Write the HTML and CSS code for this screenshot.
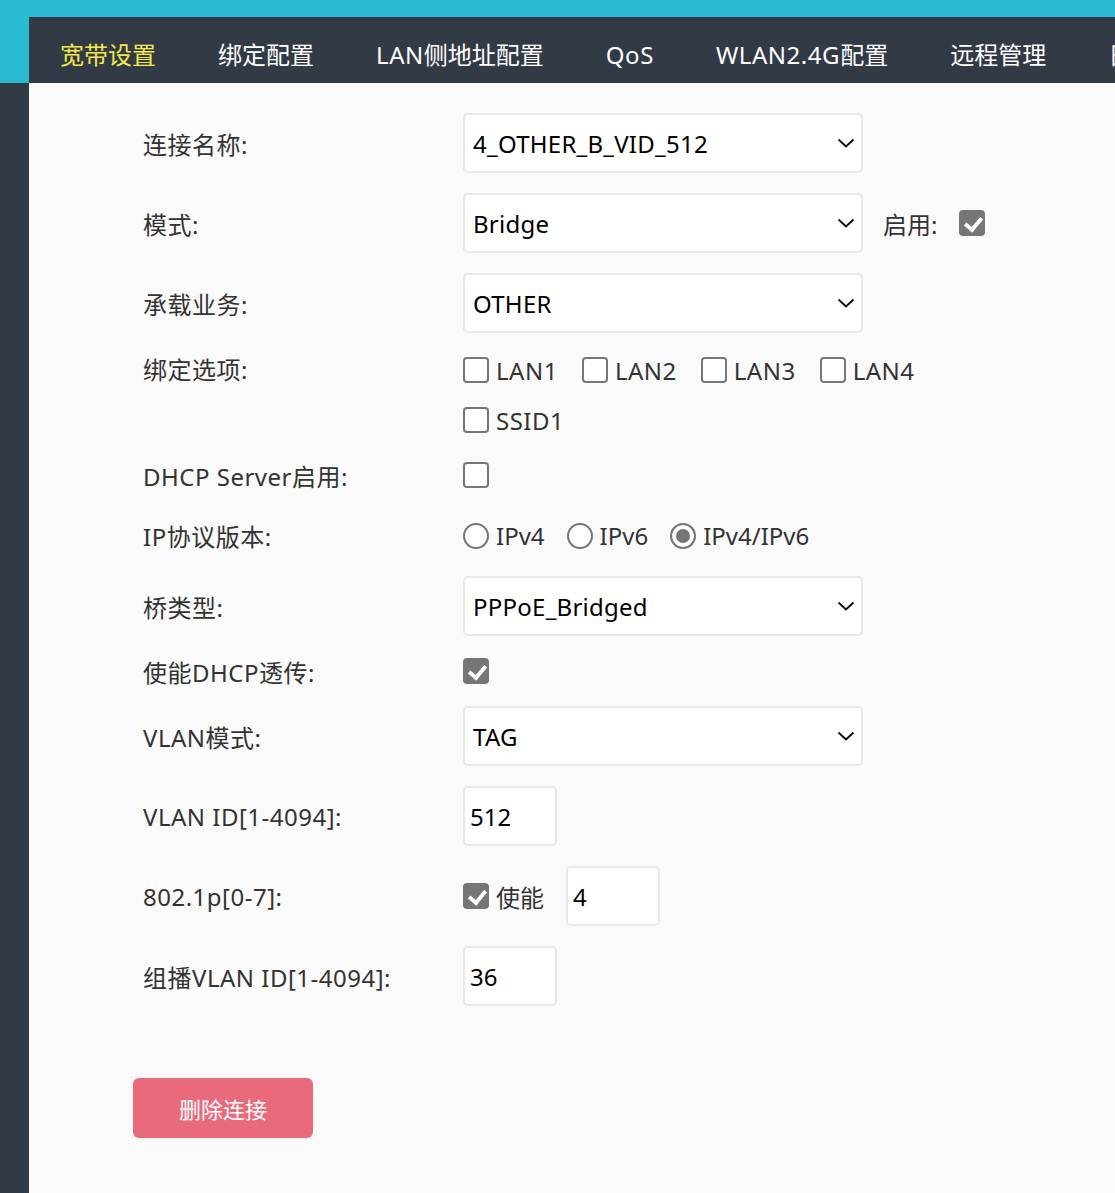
FILE: index.html
```html
<!DOCTYPE html>
<html lang="zh-CN">
<head>
<meta charset="utf-8">
<title>宽带设置</title>
<link rel="stylesheet" href="styles.css">
</head>
<body>
<header class="top">
  <nav class="nav">
    <a class="nav-item active">宽带设置</a>
    <a class="nav-item">绑定配置</a>
    <a class="nav-item"><span class="lt">LAN</span>侧地址配置</a>
    <a class="nav-item"><span class="lt">QoS</span></a>
    <a class="nav-item"><span class="lt">WLAN2.4G</span>配置</a>
    <a class="nav-item">远程管理</a>
    <a class="nav-item">日志管理</a>
  </nav>
</header>
<main class="page">
  <form class="form">
    <div class="row row-sel">
      <label class="lbl">连接名称:</label>
      <div class="select"><select><option>4_OTHER_B_VID_512</option></select><svg class="chev" viewBox="0 0 18 10" width="18" height="10"><polyline points="1.5,1.5 9,8.5 16.5,1.5"/></svg></div>
    </div>
    <div class="row row-sel">
      <label class="lbl">模式:</label>
      <div class="select"><select><option>Bridge</option></select><svg class="chev" viewBox="0 0 18 10" width="18" height="10"><polyline points="1.5,1.5 9,8.5 16.5,1.5"/></svg></div>
      <span class="inline-lbl">启用:</span>
      <input class="cb" type="checkbox" checked>
    </div>
    <div class="row row-sel">
      <label class="lbl">承载业务:</label>
      <div class="select"><select><option>OTHER</option></select><svg class="chev" viewBox="0 0 18 10" width="18" height="10"><polyline points="1.5,1.5 9,8.5 16.5,1.5"/></svg></div>
    </div>
    <div class="row row-bind">
      <label class="lbl lbl-line">绑定选项:</label>
      <div class="opts">
        <label class="opt"><input class="cb" type="checkbox">LAN1</label>
        <label class="opt"><input class="cb" type="checkbox">LAN2</label>
        <label class="opt"><input class="cb" type="checkbox">LAN3</label>
        <label class="opt"><input class="cb" type="checkbox">LAN4</label>
        <label class="opt"><input class="cb" type="checkbox">SSID1</label>
      </div>
    </div>
    <div class="row row-dhcp">
      <label class="lbl">DHCP Server启用:</label>
      <input class="cb" type="checkbox">
    </div>
    <div class="row row-ip">
      <label class="lbl">IP协议版本:</label>
      <label class="opt opt-r"><input class="rd" type="radio" name="ip">IPv4</label>
      <label class="opt opt-r"><input class="rd" type="radio" name="ip">IPv6</label>
      <label class="opt opt-r"><input class="rd" type="radio" name="ip" checked>IPv4/IPv6</label>
    </div>
    <div class="row row-sel">
      <label class="lbl">桥类型:</label>
      <div class="select"><select><option>PPPoE_Bridged</option></select><svg class="chev" viewBox="0 0 18 10" width="18" height="10"><polyline points="1.5,1.5 9,8.5 16.5,1.5"/></svg></div>
    </div>
    <div class="row row-chk">
      <label class="lbl">使能DHCP透传:</label>
      <input class="cb" type="checkbox" checked>
    </div>
    <div class="row row-sel">
      <label class="lbl">VLAN模式:</label>
      <div class="select"><select><option>TAG</option></select><svg class="chev" viewBox="0 0 18 10" width="18" height="10"><polyline points="1.5,1.5 9,8.5 16.5,1.5"/></svg></div>
    </div>
    <div class="row row-sel">
      <label class="lbl">VLAN ID[1-4094]:</label>
      <input class="txt" type="text" value="512">
    </div>
    <div class="row row-sel">
      <label class="lbl">802.1p[0-7]:</label>
      <label class="opt opt-en"><input class="cb" type="checkbox" checked>使能</label>
      <input class="txt txt-prio" type="text" value="4">
    </div>
    <div class="row row-sel">
      <label class="lbl">组播VLAN ID[1-4094]:</label>
      <input class="txt" type="text" value="36">
    </div>
  </form>
  <button class="del" type="button">删除连接</button>
</main>
</body>
</html>
```
FILE: styles.css
```css
* { box-sizing: border-box; }
html, body { margin: 0; padding: 0; }
body {
  background: #323a45;
  font-family: "Noto Sans", "Noto Sans CJK SC", sans-serif;
  overflow: hidden;
  width: 1115px;
}
.top {
  background: #2bbcd4;
  padding: 17px 0 0 29px;
  height: 83px;
}
.nav {
  background: #323a45;
  height: 66px;
  display: flex;
  white-space: nowrap;
  overflow: hidden;
}
.nav-item {
  flex: none;
  padding: 10px 31px 0;
  line-height: 56px;
  font-size: 24px;
  color: #ffffff;
}
.nav-item.active { color: #f4e84c; }
.lt { letter-spacing: 0.55px; }

.page {
  margin-left: 29px;
  background: #fafafa;
  min-height: 1110px;
  padding: 20px 0 0 114px;
}
.form { display: flex; flex-direction: column; }
.row { display: flex; align-items: center; }
.row-sel { height: 80px; }
.row-bind { align-items: flex-start; padding-top: 2px; height: 102px; }
.row-dhcp { height: 60px; }
.row-ip { height: 61px; }
.row-chk { height: 50px; }
.lbl {
  flex: none;
  width: 320px;
  font-size: 24px;
  letter-spacing: 0.5px;
  color: #333;
}
.lbl-line { line-height: 50px; }

.select { position: relative; width: 400px; height: 60px; flex: none; }
.select select {
  appearance: none;
  -webkit-appearance: none;
  width: 100%;
  height: 100%;
  margin: 0;
  border: 2px solid #e8e8e8;
  border-radius: 5px;
  background: #fff;
  color: #000;
  font-family: "Noto Sans", "Noto Sans CJK SC", sans-serif;
  font-size: 24px;
  letter-spacing: 0.25px;
  padding: 0 40px 0 8px;
  outline: none;
}
.chev {
  position: absolute;
  right: 8px;
  top: 25px;
  fill: none;
  stroke: #111;
  stroke-width: 2;
  pointer-events: none;
}
.inline-lbl {
  margin-left: 20px;
  margin-right: 22px;
  font-size: 24px;
  color: #333;
}

.cb, .rd {
  appearance: none;
  -webkit-appearance: none;
  position: relative;
  flex: none;
  width: 26px;
  height: 26px;
  margin: 0;
  border: 2px solid #767676;
  border-radius: 4px;
  background: #fff;
}
.cb:checked { background: #767676; }
.cb:checked::before {
  content: "";
  position: absolute;
  left: 7px;
  top: 2px;
  width: 7px;
  height: 13px;
  border-right: 4px solid #fff;
  border-bottom: 4px solid #fff;
  transform: rotate(40deg);
}
.rd { border-radius: 50%; }
.rd:checked { background: #767676; box-shadow: inset 0 0 0 4px #fff; }

.opts {
  display: flex;
  flex-wrap: wrap;
  width: 480px;
}
.opt {
  display: flex;
  align-items: center;
  gap: 7px;
  height: 50px;
  margin-right: 24px;
  font-size: 24px;
  letter-spacing: 0.5px;
  color: #333;
}
.opt-r { margin-right: 22px; letter-spacing: 0; }
.opt-en { letter-spacing: 0; margin-right: 22px; }

.txt {
  width: 94px;
  height: 60px;
  flex: none;
  margin: 0;
  border: 2px solid #e8e8e8;
  border-radius: 5px;
  background: #fff;
  padding: 0 5px;
  font-family: "Noto Sans", "Noto Sans CJK SC", sans-serif;
  font-size: 24px;
  color: #000;
  outline: none;
}

.del {
  display: block;
  margin: 62px 0 0 -10px;
  width: 180px;
  height: 60px;
  border: none;
  border-radius: 6px;
  background: #e96a7b;
  color: #fff;
  font-family: "Noto Sans", "Noto Sans CJK SC", sans-serif;
  font-size: 22px;
}
```
